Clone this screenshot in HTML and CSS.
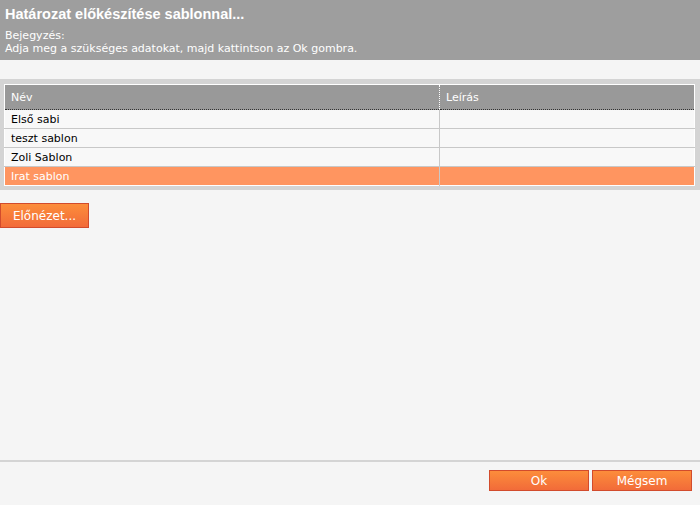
FILE: index.html
```html
<!DOCTYPE html>
<html lang="hu">
<head>
  <meta charset="UTF-8" />
  <title>Határozat előkészítése sablonnal</title>
  <link rel="stylesheet" href="styles.css">
</head>
<body>

<div class="dialog">
  <div class="dialog-header">
    <div class="dialog-title">Határozat előkészítése sablonnal...</div>
    <div class="dialog-note">Bejegyzés:</div>
    <div class="dialog-note">Adja meg a szükséges adatokat, majd kattintson az Ok gombra.</div>
  </div>

  <div class="dialog-body">
    <div class="grid-box">
      <table class="grid">
        <tr>
          <th class="col-name">Név</th>
          <th>Leírás</th>
        </tr>
        <tr><td>Első sabi</td><td></td></tr>
        <tr><td>teszt sablon</td><td></td></tr>
        <tr><td>Zoli Sablon</td><td></td></tr>
        <tr class="selected"><td>Irat sablon</td><td></td></tr>
      </table>
    </div>

    <div class="preview-row">
      <button class="btn btn-preview">Előnézet...</button>
    </div>
  </div>

  <div class="dialog-footer">
    <button class="btn">Ok</button>
    <button class="btn">Mégsem</button>
  </div>
</div>

</body>
</html>
```

FILE: styles.css
```css
html, body {
  margin: 0;
  padding: 0;
  height: 100%;
}

body {
  background: #f5f5f5;
  font-family: Tahoma, "DejaVu Sans", Verdana, sans-serif;
  font-size: 11px;
  color: #000;
}

.dialog {
  height: 505px;
  display: flex;
  flex-direction: column;
}

.dialog-header {
  background: #9e9e9e;
  color: #fff;
  height: 60px;
  box-sizing: border-box;
  padding: 4px 5px 0 5px;
}

.dialog-title {
  font-family: "Liberation Sans", Arial, sans-serif;
  font-weight: bold;
  font-size: 14.5px;
  line-height: 20px;
  margin-bottom: 5px;
}

.dialog-note {
  line-height: 13px;
}

.dialog-body {
  flex: 1;
  padding-top: 19px;
}

.grid-box {
  background: #d4d4d4;
  padding: 5px 5px 4px 4px;
}

.grid {
  width: 100%;
  border-collapse: collapse;
  border: 1px solid #fff;
  background: #f8f8f8;
}

.grid th {
  background: #999;
  color: #fff;
  font-weight: normal;
  text-align: left;
  height: 24px;
  padding: 0 0 0 6px;
  border-bottom: 1px dotted #333;
}

.grid th.col-name {
  width: 428px;
  border-right: 1px dotted #fff;
}

.grid td {
  height: 18px;
  padding: 0 0 0 6px;
  border-bottom: 1px solid #c8c8c8;
  border-right: 1px solid #c8c8c8;
}

.grid td:last-child {
  border-right: none;
}

.grid tr:last-child td {
  border-bottom: none;
}

.grid tr.selected td {
  background: #ff9560;
  color: #fff;
}

.preview-row {
  padding-top: 13px;
}

.btn {
  font-family: inherit;
  font-size: 12px;
  color: #fff;
  background: linear-gradient(#fc8d3b, #f26b39);
  border: 1px solid #d24b2c;
  height: 21px;
  width: 100px;
  padding: 0;
  margin: 0;
}

.btn-preview {
  width: 89px;
  height: 25px;
}

.dialog-footer {
  border-top: 2px solid #d4d4d4;
  height: 45px;
  display: flex;
  justify-content: flex-end;
  gap: 3px;
  padding: 8px 8px 0 0;
  box-sizing: border-box;
}
```
